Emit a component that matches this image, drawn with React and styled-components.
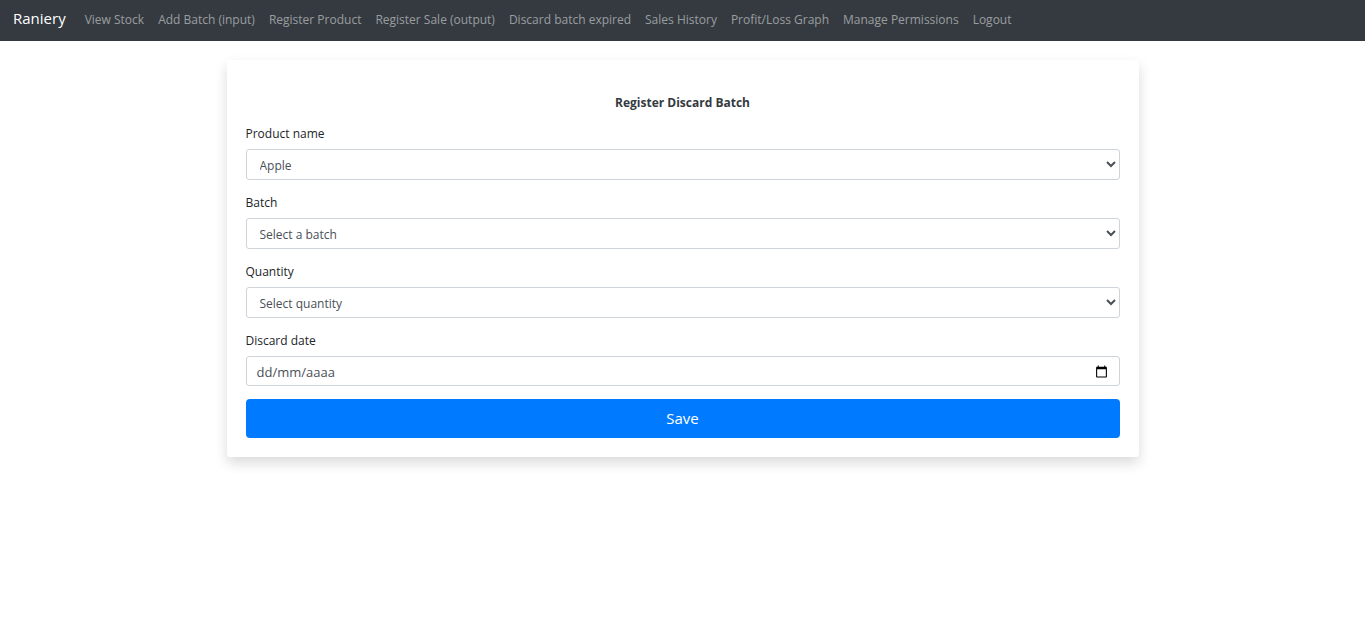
import React from 'react';
import styled, { createGlobalStyle } from 'styled-components';

const GlobalStyle = createGlobalStyle`
  *, *::before, *::after { box-sizing: border-box; }
  body {
    margin: 0;
    background: #fff;
    color: #212529;
    font-family: "Segoe UI", "Open Sans", "Noto Sans", sans-serif;
    font-size: 12px;
    line-height: 19px;
  }
`;

const Navbar = styled.nav`
  display: flex;
  flex-wrap: wrap;
  align-items: center;
  min-height: 41px;
  padding: 0 13px 2px;
  background: #343a40;
`;

const Brand = styled.a`
  margin-right: 13px;
  padding-bottom: 3px;
  color: #fff;
  font-size: 15px;
  line-height: 24px;
  text-decoration: none;
`;

const NavList = styled.ul`
  display: flex;
  flex-wrap: wrap;
  column-gap: 2px;
  margin: 0;
  padding: 0;
  list-style: none;
`;

const NavLink = styled.a`
  display: block;
  padding: 6px;
  color: rgba(255, 255, 255, 0.5);
  text-decoration: none;
  &:hover { color: rgba(255, 255, 255, 0.75); }
`;

const Card = styled.main`
  max-width: 912px;
  margin: 19px auto;
  padding: 33px 19px 19px;
  border-radius: 3px;
  background: #fff;
  box-shadow: 0 6px 13px rgba(0, 0, 0, 0.15);
`;

const Title = styled.h1`
  margin: 0 0 12px;
  color: #343a40;
  font-size: 12px;
  font-weight: 700;
  line-height: 19px;
  text-align: center;
`;

const Field = styled.div`
  margin-bottom: 13px;
`;

const Label = styled.label`
  display: block;
  margin-bottom: 6px;
`;

const ControlBox = styled.div`
  position: relative;
`;

const Select = styled.select`
  display: block;
  width: 100%;
  height: 31px;
  padding: 2px 9px 0;
  border: 1px solid #ced4da;
  border-radius: 3px;
  background: #fff;
  color: #495057;
  font: inherit;
`;

const DateInput = styled.input`
  display: block;
  width: 100%;
  height: 30px;
  padding: 2px 40px 0 10px;
  border: 1px solid #ced4da;
  border-radius: 3px;
  background: #fff;
  color: #495057;
  font: inherit;
  font-size: 13px;
  &::placeholder { color: #495057; opacity: 1; }
`;

const PickerButton = styled.button`
  position: absolute;
  top: 0;
  right: 12px;
  bottom: 0;
  display: flex;
  align-items: center;
  padding: 0;
  border: 0;
  background: none;
  color: #000;
`;

const SaveButton = styled.button`
  display: block;
  width: 100%;
  height: 39px;
  padding: 0;
  border: 0;
  border-radius: 4px;
  background: #007bff;
  color: #fff;
  font: inherit;
  font-size: 15px;
`;

const links = [
  'View Stock',
  'Add Batch (input)',
  'Register Product',
  'Register Sale (output)',
  'Discard batch expired',
  'Sales History',
  'Profit/Loss Graph',
  'Manage Permissions',
  'Logout',
];

const selects = [
  { id: 'product', label: 'Product name', option: 'Apple' },
  { id: 'batch', label: 'Batch', option: 'Select a batch' },
  { id: 'quantity', label: 'Quantity', option: 'Select quantity' },
];

function CalendarIcon() {
  return (
    <svg width="13" height="13" viewBox="0 0 24 24" fill="currentColor" aria-hidden="true">
      <path d="M20 3h-1V1h-2v2H7V1H5v2H4c-1.100 0-2 .9-2 2v16c0 1.100.9 2 2 2h16c1.100 0 2-.9 2-2V5c0-1.100-.9-2-2-2zm0 18H4V8h16v13z" />
    </svg>
  );
}

export default function App() {
  return (
    <>
      <GlobalStyle />
      <Navbar>
        <Brand href="#">Raniery</Brand>
        <NavList>
          {links.map((text) => (
            <li key={text}>
              <NavLink href="#">{text}</NavLink>
            </li>
          ))}
        </NavList>
      </Navbar>
      <Card>
        <Title>Register Discard Batch</Title>
        <form onSubmit={(event) => event.preventDefault()}>
          {selects.map(({ id, label, option }) => (
            <Field key={id}>
              <Label htmlFor={id}>{label}</Label>
              <Select id={id}>
                <option>{option}</option>
              </Select>
            </Field>
          ))}
          <Field>
            <Label htmlFor="date">Discard date</Label>
            <ControlBox>
              <DateInput id="date" type="text" inputMode="numeric" placeholder="dd/mm/aaaa" />
              <PickerButton type="button" aria-label="Open calendar">
                <CalendarIcon />
              </PickerButton>
            </ControlBox>
          </Field>
          <SaveButton type="submit">Save</SaveButton>
        </form>
      </Card>
    </>
  );
}
